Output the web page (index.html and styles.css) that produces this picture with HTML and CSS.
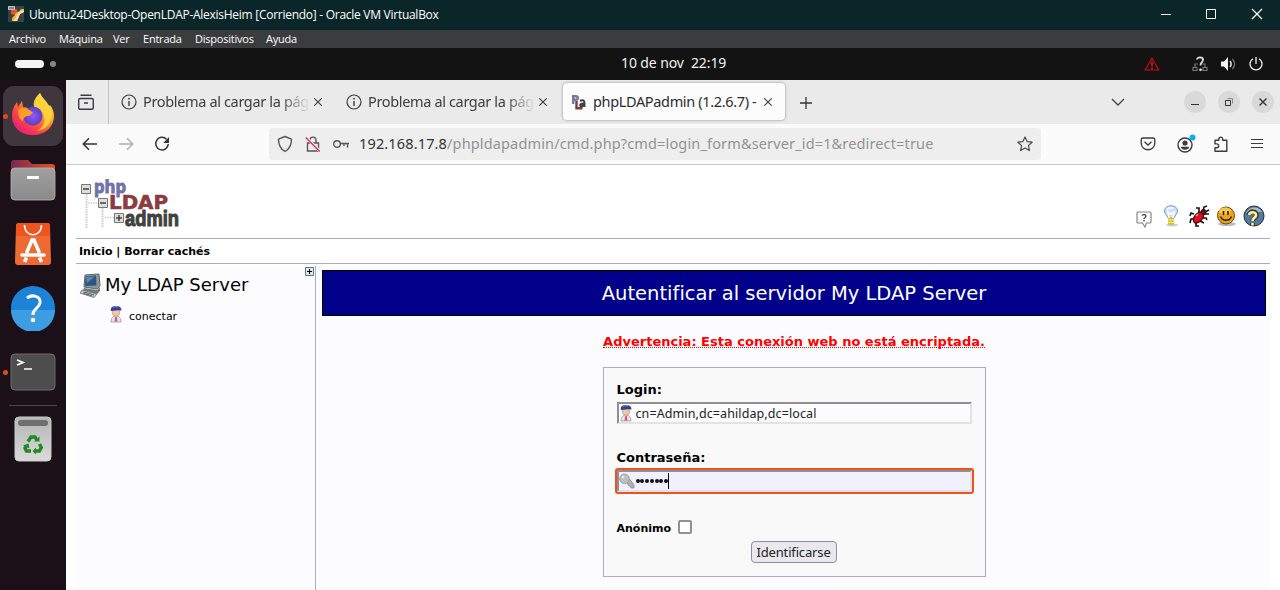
FILE: index.html
```
<!DOCTYPE html>
<html lang="es">
<head>
<meta charset="utf-8">
<title>phpLDAPadmin (1.2.6.7)</title>
<link rel="stylesheet" href="styles.css">
</head>
<body>
<svg width="0" height="0" class="defs">
  <defs>
    <symbol id="info" viewBox="0 0 16 16"><circle cx="8" cy="8" r="7" fill="none" stroke="#3c3c40" stroke-width="1.2"/><path d="M8 7v5" stroke="#3c3c40" stroke-width="1.4"/><circle cx="8" cy="4.7" r=".9" fill="#3c3c40"/></symbol>
    <symbol id="close" viewBox="0 0 10 10"><path d="M1.300 1.300l7.400 7.400M8.700 1.300l-7.400 7.400" stroke="#3c3c40" stroke-width="1.1"/></symbol>
    <symbol id="user" viewBox="0 0 14 18">
      <path d="M2 17c0-4 2-6 5-6s5 2 5 6z" fill="#e6e6f0" stroke="#8a8a9c" stroke-width=".7"/>
      <path d="M6.200 12h1.600l.7 4.500H5.500z" fill="#d55"/>
      <circle cx="7" cy="7.300" r="3.800" fill="#f3c6a8" stroke="#b98a72" stroke-width=".6"/>
      <path d="M1.800 5.500C1.500 2 4 1 7 1s5.500 1 5.500 4.500L9 5.200 2 6z" fill="#34408e"/>
      <path d="M4 2.300c2-.9 4-.8 5 0" stroke="#8d97d4" fill="none"/>
    </symbol>
    <linearGradient id="ffo" x1="1" y1="0" x2=".2" y2="1"><stop offset="0" stop-color="#fff14d"/><stop offset=".4" stop-color="#ffa62b"/><stop offset=".7" stop-color="#ff4a3f"/><stop offset="1" stop-color="#e01585"/></linearGradient>
    <linearGradient id="gray" x1="0" y1="0" x2="0" y2="1"><stop offset="0" stop-color="#a0a0a0"/><stop offset="1" stop-color="#8a8a8a"/></linearGradient>
    <linearGradient id="fold" x1="0" y1="0" x2="1" y2="0"><stop offset="0" stop-color="#7b2750"/><stop offset="1" stop-color="#e35226"/></linearGradient>
    <linearGradient id="bin" x1="0" y1="0" x2="0" y2="1"><stop offset="0" stop-color="#b4b4b4"/><stop offset="1" stop-color="#dadada"/></linearGradient>
    <radialGradient id="ffp"><stop offset="0" stop-color="#9059ff"/><stop offset="1" stop-color="#5840c0"/></radialGradient>
  </defs>
</svg>

<header class="titlebar">
  <svg class="vbox" width="16" height="16" viewBox="0 0 16 16"><rect width="16" height="16" fill="#3a3f4c"/><path d="M2 3h6l2 4 3-4h3v3l-4 2-3 7H4v-3l3-3z" fill="#f7b04a"/><path d="M3 4l5-1 1 3-3 3-3-1z" fill="#e2571e"/><path d="M10 6l6-2v2l-4 2-3 7H5l3-3z" fill="#ffe09a"/><rect width="7" height="4" fill="#b9bcc6"/><path d="M1 2h5" stroke="#555"/></svg>
  <span class="wintitle">Ubuntu24Desktop-OpenLDAP-AlexisHeim [Corriendo] - Oracle VM VirtualBox</span>
  <svg class="wincontrols" width="106" height="12" viewBox="0 0 106 12" fill="none" stroke="#fff"><path d="M0 6.500h10M45.500 1.500h9v9h-9z"/><path d="M91 1l10 10M101 1l-10 10" stroke-width="1.200"/></svg>
</header>
<nav class="menubar"><span class="m1">Archivo</span><span class="m2">Máquina</span><span class="m3">Ver</span><span class="m4">Entrada</span><span class="m5">Dispositivos</span><span class="m6">Ayuda</span></nav>
<div class="topbar">
  <div class="workspaces"><i class="pill"></i><i class="dot"></i></div>
  <div class="clock">10 de nov&nbsp; 22:19</div>
  <div class="status">
    <svg class="warn" width="16" height="14" viewBox="0 0 16 14"><path d="M8 1.200L14.800 13H1.200z" fill="none" stroke="#c9100f" stroke-width="1.100"/><path d="M8 4.500v5M8 10.500v1.500" stroke="#e01010" stroke-width="1.800"/></svg>
    <svg class="net" width="16" height="16" viewBox="0 0 16 16" fill="none"><path d="M3 11V8h3M13 11V8h-3M1 11.500h4v3H1zM11 11.500h4v3h-4z" stroke="#777" stroke-width="1.200"/><path d="M5 3.500C5 .7 11 .7 11 3.800 11 6.500 8.500 6 8.500 9.500" stroke="#ddd" stroke-width="1.800"/><circle cx="8.500" cy="13.800" r="1.300" fill="#eee"/></svg>
    <svg class="vol" width="16" height="14" viewBox="0 0 16 14"><path d="M1 4.500h3L8 0v14L4 9.500H1z" fill="#f2f2f2"/><path d="M10 4c1.500 2 1.500 4 0 6" fill="none" stroke="#f2f2f2" stroke-width="1.400"/><path d="M12.500 2c2.500 3 2.500 7 0 10" fill="none" stroke="#777" stroke-width="1.200"/></svg>
    <svg class="power" width="14" height="14" viewBox="0 0 14 14" fill="none" stroke="#f2f2f2" stroke-width="1.300"><path d="M4 1.700a6 6 0 1 0 6 0M7 0v7"/></svg>
  </div>
</div>

<div class="desktop">
  <aside class="dock">
    <div class="app active running"><svg width="44" height="46" viewBox="0 0 44 46">
      <path d="M22 43C10 43 1 35 1 24c0-6 2-10 5-14l1 5 4-6 1 6c3 0 6 1 7 3h5c0-7 0-12 5-17 2 5 7 8 9 13l1-1c3 4 4 7 4 11 0 11-9 19-21 19z" fill="url(#ffo)"/>
      <path d="M29 1c-6 5-8 11-5 16 4 0 8 2 9 7 2 7-2 12-7 15 12-2 17-12 14-22-3-6-9-10-11-16z" fill="#ffd83d" opacity=".85"/>
      <circle cx="22" cy="24" r="9.500" fill="url(#ffp)"/>
      <path d="M7 18c5-3 9-2 13 1l2 2-4 3c-4 0-6 2-6 5-3-1-5-5-5-11z" fill="#ff9d28"/>
      <path d="M1.500 28c3 10 14 15 25 11-10 7-22 1-25-11z" fill="#ff2b6f" opacity=".7"/>
    </svg></div>
    <div class="app"><svg width="46" height="42" viewBox="0 0 46 42"><path d="M1 12V4q0-3 3-3h14l4 4h20q3 0 3 3v6H1z" fill="url(#fold)"/><rect x="1" y="9" width="44" height="32" rx="4" fill="url(#gray)" stroke="#b4b4b4" stroke-width=".8"/><rect x="17" y="17" width="12" height="3" rx="1" fill="#fff"/></svg></div>
    <div class="app"><svg width="38" height="44" viewBox="0 0 38 44"><path d="M5 1h28q3 0 3 3l1 36q0 3-3 3H4q-3 0-3-3L2 4q0-3 3-3z" fill="#ef6a33"/><path d="M5 1h28q3 0 3 3v10H2V4q0-3 3-3z" fill="#ee5420"/><path d="M10.500 3c0 13 17 13 17 0" fill="none" stroke="#fff" stroke-width="1.600"/><path d="M12.500 31l5.500-13h2l5.500 13M10.500 40l2-4.500M27.500 40l-2-4.500" fill="none" stroke="#fff" stroke-width="3.600"/><path d="M8 33h22" stroke="#fff" stroke-width="3.600" stroke-linecap="round"/></svg></div>
    <div class="app"><svg width="46" height="46" viewBox="0 0 46 46"><circle cx="23" cy="23" r="22" fill="#1c83d6"/><path d="M1 25a22 22 0 0 0 44 0z" fill="#3c9de2"/><path d="M17 13c5-4 14-2 13 5-1 5-7 6-7 11v1" fill="none" stroke="#fff" stroke-width="3"/><circle cx="23" cy="35" r="2.300" fill="#fff"/></svg></div>
    <div class="app running"><svg width="46" height="38" viewBox="0 0 46 38"><rect x="1" y="1" width="44" height="36" rx="4" fill="#4d4d4d" stroke="#6b6b6b"/><path d="M7 7l6 2.500L7 12M14 16h8" fill="none" stroke="#fff" stroke-width="1.700"/></svg></div>
    <div class="rule"></div>
    <div class="app bin"><svg width="38" height="46" viewBox="0 0 38 46"><rect x="1" y="1" width="36" height="44" rx="4" fill="url(#bin)" stroke="#ccc"/><rect x="4" y="4" width="30" height="6" rx="3" fill="#6f6f6f"/><g fill="none" stroke="#1f8a24" stroke-width="3.400"><path d="M14 25.500l3-4.500h4l2 3.500"/><path d="M25.500 28l1.800 3.500-2 3.500h-4"/><path d="M17 35h-4.500l-1.500-3 1.500-2.500"/></g><path d="M20 25.500h5.500v-5zM22 31.500v7l-3.500-3.500zM9 29.500l5.500-2 1 5z" fill="#1f8a24"/></svg></div>
  </aside>

  <main class="browser">
    <div class="tabs">
      <div class="firefoxview"><svg width="16" height="16" viewBox="0 0 16 16" fill="none" stroke="#3c3c40" stroke-width="1.400"><path d="M2.500 1.200h11M2.200 4.500h11.600q1.500 0 1.500 1.500v7.800q0 1.500-1.500 1.500H2.200Q.7 15.300.7 13.800V6Q.7 4.500 2.200 4.500zM6 9h4"/></svg></div>
      <div class="tab"><svg width="16" height="16"><use href="#info"/></svg><span class="tabtext fade">Problema al cargar la página</span><svg width="10" height="10"><use href="#close"/></svg></div>
      <div class="tab"><svg width="16" height="16"><use href="#info"/></svg><span class="tabtext fade">Problema al cargar la página</span><svg width="10" height="10"><use href="#close"/></svg></div>
      <div class="tab selected"><svg width="16" height="16" viewBox="0 0 16 16" fill="none" stroke-width="2.400"><path d="M2.200 10V2.200h2.600q2 0 2 1.800t-2 1.800H3" stroke="#77779f"/><path d="M5.500 7v7.300h6" stroke="#7d3b40"/><path d="M9 6.700c5-1.500 4.500 1 4.500 6.300M13 9.500c-5 0-4.500 3-2 2.700l2-1.200" stroke="#3c3c3c" stroke-width="2"/></svg><span class="tabtext">phpLDAPadmin (1.2.6.7) -</span><svg width="10" height="10"><use href="#close"/></svg></div>
      <svg class="plus" width="12" height="12" viewBox="0 0 12 12"><path d="M0 6h12M6 0v12" stroke="#333" stroke-width="1.300"/></svg>
      <svg class="chev" width="14" height="8" viewBox="0 0 14 8"><path d="M1 1l6 6 6-6" fill="none" stroke="#444" stroke-width="1.400"/></svg>
      <div class="wbtns">
        <span class="wbtn"><svg width="10" height="10"><path d="M1 7.500h8" stroke="#333"/></svg></span>
        <span class="wbtn"><svg width="10" height="10" fill="none"><path d="M1.500 3.500h5v5h-5z" stroke="#333"/><path d="M3.500 1.500h5v5" stroke="#888"/></svg></span>
        <span class="wbtn"><svg width="10" height="10"><path d="M1.500 1.500l7 7M8.500 1.500l-7 7" stroke="#333" stroke-width="1.400"/></svg></span>
      </div>
    </div>
    <div class="toolbar">
      <svg class="back" width="16" height="14" viewBox="0 0 16 14" fill="none" stroke="#333" stroke-width="1.500"><path d="M15 7H1.500M7 1.300L1.300 7 7 12.700"/></svg>
      <svg class="fwd" width="16" height="14" viewBox="0 0 16 14" fill="none" stroke="#b0b0b0" stroke-width="1.500"><path d="M1 7h13.500M9 1.300L14.700 7 9 12.700"/></svg>
      <svg class="reload" width="16" height="16" viewBox="0 0 16 16"><path d="M12.500 3.200A6.300 6.300 0 1 0 14.300 8" fill="none" stroke="#333" stroke-width="1.500"/><path d="M15 1v6H9.300z" fill="#333"/></svg>
      <div class="urlbar">
        <svg width="16" height="18" viewBox="0 0 16 18"><path d="M8 1.500l6.500 2.700c0 6-1.500 9.500-6.500 12.300C3 13.700 1.500 10.200 1.500 4.200z" fill="none" stroke="#55555a" stroke-width="1.400" stroke-linejoin="round"/></svg>
        <svg class="lock" width="16" height="16" viewBox="0 0 16 16" fill="none"><path d="M2.500 7h11v8h-11zM5 7V4.500C5 0 11 0 11 4.500V7" stroke="#55555a" stroke-width="1.400"/><path d="M1.200 1.500l14 14" stroke="#eee" stroke-width="3"/><path d="M.7 1.500l14 14" stroke="#e5244a" stroke-width="1.300"/></svg>
        <svg class="keyicon" width="17" height="10" viewBox="0 0 17 10" fill="none" stroke="#55555a" stroke-width="1.400"><circle cx="4" cy="5" r="3.300"/><path d="M7.300 4.500H16M14.500 5v3.500M11 5v2"/></svg>
        <span class="url"><b>192.168.17.8</b>/phpldapadmin/cmd.php?cmd=login_form&amp;server_id=1&amp;redirect=true</span>
        <svg class="star" width="16" height="16" viewBox="0 0 16 16"><path d="M8 1l2.100 4.600 5 .6-3.700 3.400 1 5L8 12.100l-4.400 2.500 1-5L.9 6.200l5-.6z" fill="none" stroke="#4a4a4e" stroke-width="1.200" stroke-linejoin="round"/></svg>
      </div>
      <div class="tools">
        <svg width="16" height="16" viewBox="0 0 16 16" fill="none" stroke="#3c3c40" stroke-width="1.300"><path d="M3 2h10q1.800 0 1.800 1.800V7c0 9-13.600 9-13.600 0V3.800Q1.200 2 3 2z"/><path d="M4.500 5.800L8 9l3.500-3.200"/></svg>
        <svg class="profile" width="20" height="20" viewBox="0 0 20 20"><circle cx="9" cy="11" r="7" fill="none" stroke="#3c3c40" stroke-width="1.400"/><circle cx="9" cy="9" r="2.600" fill="#3c3c40"/><path d="M4.800 12.700h8.400q-.5 3-4.200 3t-4.200-3z" fill="#3c3c40"/><circle cx="16.500" cy="3.500" r="3" fill="#0caef8"/></svg>
        <svg class="puzzle" width="16" height="18" viewBox="0 0 16 18"><path d="M2 5.200h3.800V4a1.900 1.900 0 0 1 3.800 0v1.200h4.200v11H2v-3.500h1.800a1.900 1.900 0 0 0 0-3.800H2z" fill="none" stroke="#3c3c40" stroke-width="1.400" stroke-linejoin="round"/></svg>
        <svg class="burger" width="12" height="12" viewBox="0 0 12 12"><path d="M0 1.500h12M0 5.500h12M0 9.500h12" stroke="#3c3c40" stroke-width="1.100"/></svg>
      </div>
    </div>

    <div class="page">
      <div class="pagehead">
        <svg class="logo" width="102" height="52" viewBox="0 0 102 52">
          <path d="M6.500 15v34M22.500 29v20" stroke="#ccc" stroke-width="2" stroke-dasharray="1.500 1"/><path d="M8 24h9M25 38.500h9" stroke="#ccc" stroke-width="1.500" stroke-dasharray="1.500 1"/>
          <g fill="#ddd" stroke="#777"><path d="M1.500 5.500h9v9h-9zM18.500 19.500h9v9h-9zM34.500 34.500h9v9h-9z"/><path d="M3 10h6M20 24h6M36 39h6M39 36v6" stroke="#444" stroke-width="1.500"/></g>
          <text x="14" y="14" textLength="32" lengthAdjust="spacingAndGlyphs" class="lphp">php</text>
          <text x="29" y="29.500" textLength="59" lengthAdjust="spacingAndGlyphs" class="lldap">LDAP</text>
          <text x="45" y="46.500" textLength="54" lengthAdjust="spacingAndGlyphs" class="ladmin">admin</text>
        </svg>
        <div class="headicons">
          <svg class="hq" width="16" height="18" viewBox="0 0 16 18"><path d="M2 2h12q1 0 1 1v9q0 1-1 1h-3.500L9 17l-2.500-4H2q-1 0-1-1V3q0-1 1-1z" fill="#fafafa" stroke="#888" stroke-width="1.200"/><path d="M6 5.500c1-1.500 4.500-1 3.800 1.200C9.500 8 8 7.500 8 9M8 10v1.500" fill="none" stroke="#444" stroke-width="1.300"/></svg>
          <svg class="hbulb" width="16" height="22" viewBox="0 0 16 22"><ellipse cx="9" cy="20" rx="6" ry="1.500" fill="#ccc"/><path d="M5 13C4 10 1.500 9 1.500 6c0-7 13-7 13 0 0 3-2.500 4-3.500 7z" fill="#cfe0fb" stroke="#7898cc"/><path d="M6 13L5 7l3 2 3-2-1 6M4 5l2-2h4" fill="none" stroke="#fff" stroke-width="1.500"/><path d="M5 13h6v6q-3 2-6 0z" fill="#e0b92f"/><path d="M5 15h6M5 17.500h6" stroke="#fff29b"/></svg>
          <svg class="hbug" width="22" height="22" viewBox="0 0 22 22"><path d="M6 9L3 8l-1 3M7 14H3l-1 4M8 17v4l3 0M11 7V3H8M16 9h5M14 13h4l1 2M15 6l1-4 3-1M17 7l4-2M12 16l4 2" fill="none" stroke="#111" stroke-width="1.600"/><ellipse cx="10.500" cy="12.500" rx="6.500" ry="4" transform="rotate(-48 10.500 12.500)" fill="#e30c18" stroke="#240004"/><circle cx="15.500" cy="7" r="2.600" fill="#93000b" stroke="#111"/><path d="M8 11l2-2" stroke="#ff9b9f" stroke-width="1.400"/></svg>
          <svg class="hface" width="20" height="22" viewBox="0 0 20 22"><ellipse cx="11" cy="19" rx="9" ry="2" fill="#bbb"/><circle cx="10" cy="10.500" r="8.500" fill="#eda516" stroke="#6c4a0b"/><ellipse cx="9" cy="6" rx="6" ry="3.500" fill="#f8c851"/><path d="M7.500 6v4M12 6v4" stroke="#222" stroke-width="1.600"/><path d="M4.500 11.500c2 5 9 5 11 0" fill="none" stroke="#222" stroke-width="1.400"/></svg>
          <svg class="hhelp" width="22" height="22" viewBox="0 0 22 22"><circle cx="11" cy="11" r="10" fill="#55799e" stroke="#1f2d3b"/><path d="M3 8c4-7 12-7 16-1-4-1-10 3-16 1z" fill="#a7c0d4"/><path d="M5.500 10c1-5 9-4 8 .5-1 3-4 3-4 5.500M9.500 18v3" fill="none" stroke="#3f3710" stroke-width="4.600"/><path d="M6 10c1-4 7.500-3.500 7 .5-1 3-3.500 2.500-3.500 5.500M9.500 18v2.500" fill="none" stroke="#fff1ad" stroke-width="2.600"/></svg>
        </div>
      </div>
      <div class="pagemenu">Inicio | Borrar cachés</div>
      <div class="columns">
        <section class="tree">
          <div class="server"><svg width="22" height="26" viewBox="0 0 22 26"><path d="M5 3l14-1 1 12-3 3-13-2z" fill="#8d989b" stroke="#5c6569"/><path d="M5.500 4.500L16 3.500l.5 10-11.500.5z" fill="#2f5680"/><path d="M6 5l9-.5L7 11z" fill="#5f87ae"/><path d="M4 16l13 2 3-3v4l-4 4-14-3z" fill="#707a7d"/><path d="M2 18l15 4-3 3.500L0 21z" fill="#c0c6c4" stroke="#7a8381"/><path d="M4 20l10 3M3 21l9 3" stroke="#666"/></svg><span>My LDAP Server</span></div>
          <div class="connect"><svg width="14" height="18"><use href="#user"/></svg><span>conectar</span></div>
          <svg class="expand" width="9" height="9" viewBox="0 0 9 9"><path d="M.5.5h8v8h-8z" fill="#dce9ec" stroke="#687476"/><path d="M2 4.500h5M4.500 2v5" stroke="#000"/></svg>
        </section>
        <section class="content">
          <h3 class="title">Autentificar al servidor My LDAP Server</h3>
          <div class="warning"><span>Advertencia: Esta conexión web no está encriptada.</span></div>
          <form class="login">
            <label class="lab">Login:</label>
            <div class="field"><svg width="14" height="18"><use href="#user"/></svg><span class="val">cn=Admin,dc=ahildap,dc=local</span></div>
            <label class="lab second">Contraseña:</label>
            <div class="field focus"><svg class="pwkey" width="16" height="16" viewBox="0 0 16 16"><path d="M7 8l3-2.500 5 6V15h-3l-1-2-1.500-.5z" fill="#b0b0b0" stroke="#888" stroke-width=".7"/><circle cx="5.500" cy="5.800" r="4.800" fill="#bdbdbd" stroke="#999" stroke-width=".8"/><circle cx="4" cy="4" r="1.500" fill="#e6e6e6"/></svg><span class="dots"><i></i><i></i><i></i><i></i><i></i><i></i><i></i></span><b class="caret"></b></div>
            <div class="anon"><span>Anónimo</span><i class="check"></i></div>
            <div class="submit"><span class="button">Identificarse</span></div>
          </form>
        </section>
      </div>
    </div>
  </main>
</div>
</body>
</html>
```
FILE: styles.css
```
* { box-sizing: border-box; }
body { margin: 0; width: 1280px; height: 590px; overflow: hidden; background: #fff; font-family: "DejaVu Sans", sans-serif; display: flex; flex-direction: column; }
svg { display: block; flex: none; }
.defs { position: absolute; }
i, b { font-style: normal; font-weight: normal; display: block; }

.titlebar { height: 30px; flex: none; background: #0b2628; color: #fff; display: flex; align-items: center; padding: 0 13px 2px 8px; font: 12px "Open Sans", sans-serif; white-space: nowrap; }
.wintitle { margin-left: 5px; letter-spacing: -0.27px; padding-top: 1px; }
.wincontrols { margin-left: auto; }
.menubar { height: 18px; flex: none; background: #3b3c3e; color: #fff; display: flex; align-items: center; padding: 0 0 2px 9px; font: 11px "Open Sans", sans-serif; white-space: nowrap; }
.menubar span { flex: none; letter-spacing: -0.22px; }
.m1 { width: 50px; } .m2 { width: 54px; } .m3 { width: 30px; } .m4 { width: 52px; } .m5 { width: 71px; }

.topbar { height: 32px; flex: none; background: #131313; display: grid; grid-template-columns: 606px auto 1fr; align-items: center; padding: 0 17px 0 15px; color: #f2f2f2; }
.workspaces { display: flex; align-items: center; gap: 6px; }
.pill { width: 29px; height: 8px; border-radius: 4px; background: #f4f4f4; }
.dot { width: 6px; height: 6px; border-radius: 50%; background: #868686; }
.clock { width: 109px; font: 14px "Noto Sans", sans-serif; letter-spacing: -0.1px; white-space: nowrap; padding-bottom: 3px; }
.status { display: flex; align-items: center; justify-content: flex-end; }
.net { margin-left: 32px; }
.vol { margin-left: 12px; }
.power { margin-left: 13px; }

.desktop { flex: 1; min-height: 0; display: flex; }
.dock { width: 66px; flex: none; background: #1b1017; display: flex; flex-direction: column; align-items: center; padding-top: 6px; gap: 4px; }
.app { width: 60px; height: 60px; flex: none; display: flex; align-items: center; justify-content: center; position: relative; }
.app.active { background: #40363e; border-radius: 11px; }
.app.active svg { margin-top: -2px; }
.app.bin { padding-top: 2px; }
.running::before { content: ""; position: absolute; left: 0; top: 28px; width: 5px; height: 5px; border-radius: 50%; background: #df4a18; }
.rule { width: 48px; height: 1px; flex: none; background: #4e464b; margin: -1px 0 -2px; }

.browser { flex: 1; min-width: 0; display: flex; flex-direction: column; background: #fff; }
.tabs { height: 44px; flex: none; background: #eaeaea; display: flex; align-items: center; }
.firefoxview { width: 43px; height: 44px; border-right: 1px solid #c2c2c2; display: flex; align-items: center; padding-left: 12px; }
.tab { width: 225px; flex: none; height: 38px; display: flex; align-items: center; padding-left: 12px; color: #3d3d40; }
.tabtext { font: 14.500px/20px "Noto Sans", sans-serif; width: 165px; margin: -2px 5px 0 6px; flex: none; white-space: nowrap; overflow: hidden; letter-spacing: -0.35px; }
.fade { -webkit-mask-image: linear-gradient(90deg, #000 137px, transparent 167px); mask-image: linear-gradient(90deg, #000 137px, transparent 167px); }
.tab.selected { width: 222px; height: 37px; margin: 0 0 1px 4px; background: #fcfcfc; border-radius: 4px; box-shadow: 0 0 3px rgba(0,0,0,.4); padding-left: 8px; color: #2c2c30; }
.selected .tabtext { width: 167px; margin-right: 3px; margin-top: -1px; }
.plus { margin: 1px 0 0 15px; }
.chev { margin-left: 299px; }
.wbtns { display: flex; gap: 12px; margin-left: 59px; }
.wbtn { width: 22px; height: 22px; border-radius: 50%; background: #d9d9d9; display: flex; align-items: center; justify-content: center; }
.toolbar { height: 41px; flex: none; background: #fbfbfb; border-bottom: 1px solid #ccc; display: flex; align-items: center; padding-left: 16px; }
.fwd { margin-left: 20px; }
.reload { margin-left: 20px; }
.urlbar { width: 772px; height: 32px; flex: none; margin-left: 99px; background: #eee; border-radius: 4px; display: flex; align-items: center; padding: 0 8px; }
.lock { margin-left: 12px; }
.keyicon { margin-left: 12px; }
.url { margin: -2px 0 0 9px; font: 14.500px/20px "Noto Sans", sans-serif; letter-spacing: .145px; color: #939393; white-space: nowrap; }
.url b { display: inline; color: #333; }
.star { margin-left: auto; }
.tools { flex: 1; display: flex; align-items: center; padding-left: 99px; }
.profile { margin-left: 20px; }
.puzzle { margin-left: 17px; }
.burger { margin-left: 22px; }

.page { padding: 0 10px; flex: 1; min-height: 0; display: flex; flex-direction: column; }
.pagehead { height: 74px; flex: none; border-bottom: 1px solid #aac; display: flex; justify-content: space-between; padding: 14px 5px 0 4px; }
.lphp { font: bold 17px "Open Sans", sans-serif; fill: #7172aa; stroke: #7172aa; stroke-width: .9; }
.lldap { font: bold 19px "DejaVu Sans", sans-serif; fill: #8c3b40; stroke: #8c3b40; stroke-width: .6; }
.ladmin { font: bold 22px "Liberation Sans", sans-serif; fill: #414141; stroke: #414141; stroke-width: 1.1; }
.headicons { display: flex; align-items: center; height: 22px; margin-top: 26px; }
.hq { margin-top: 5px; }
.hbulb { margin-left: 11px; }
.hbug { margin-left: 9px; }
.hface { margin-left: 6px; }
.hhelp { margin-left: 7px; }
.pagemenu { height: 25px; flex: none; border-bottom: 1px solid #aac; font-weight: bold; font-size: 11px; line-height: 26px; padding-left: 3px; }
.columns { flex: 1; min-height: 0; display: flex; padding-top: 2px; }
.tree { width: 240px; flex: none; border-right: 1px solid #aac; background: #fcfcfe; position: relative; }
.server { display: flex; align-items: center; height: 26px; margin: 6px 0 0 4px; gap: 3px; font-size: 18px; }
.server span { padding-bottom: 2px; }
.connect { display: flex; align-items: center; height: 18px; margin: 7px 0 0 33px; gap: 6px; font-size: 11px; }
.connect span { padding-top: 5px; }
.expand { position: absolute; right: 1px; top: 1px; }
.content { flex: 1; background: #fcfcfe; padding: 4px 4px 0 6px; }
.title { margin: 0; height: 46px; background: #00008b; border: 1px solid #000; color: #fff; text-align: center; font-weight: normal; font-size: 19.500px; line-height: 45px; }
.warning { text-align: center; margin-top: 18px; height: 16px; line-height: 16px; font-size: 13px; font-weight: bold; color: #f00; }
.warning span { display: inline-block; height: 14px; border-bottom: 1px dotted #f00; }
.login { display: block; width: 383px; height: 210px; margin: 17px auto 0; border: 1px solid #aac; background: #f9f9f9; padding: 13px 13px 0 12px; }
.lab { display: block; height: 18px; line-height: 18px; font-size: 13px; font-weight: bold; padding-left: 1px; }
.field { height: 22px; margin: 3px 0 0 1px; width: 355px; border: 2px solid; border-color: #8f8f92 #e3e3e3 #e3e3e3 #8f8f92; background: #fcfcfe; display: flex; align-items: center; padding-left: 0; }
.val { margin-left: 3px; font: 12.500px "Noto Sans", sans-serif; letter-spacing: .1px; color: #222; }
.second { margin-top: 25px; }
.focus { background: #f0f0ff; outline: 2px solid #e95420; outline-offset: 0; border-radius: 1px; }
.dots { display: flex; gap: .8px; margin-left: 1px; }
.dots i { width: 4px; height: 4px; border-radius: 50%; background: #111; }
.caret { width: 1px; height: 16px; background: #000; }
.anon { display: flex; align-items: center; height: 16px; margin-top: 27px; padding-left: 1px; font-size: 11px; font-weight: bold; gap: 7px; }
.anon span { padding-top: 3px; }
.check { width: 14px; height: 14px; border: 2px solid #8f8f9d; border-radius: 2px; background: #fff; }
.submit { display: flex; justify-content: center; margin-top: 6px; }
.button { width: 86px; height: 22px; border: 1px solid #8f8f9d; border-radius: 4px; background: #e9e9ed; font: 13px/20px "Noto Sans", sans-serif; letter-spacing: -0.15px; text-align: center; white-space: nowrap; color: #222; }
```
